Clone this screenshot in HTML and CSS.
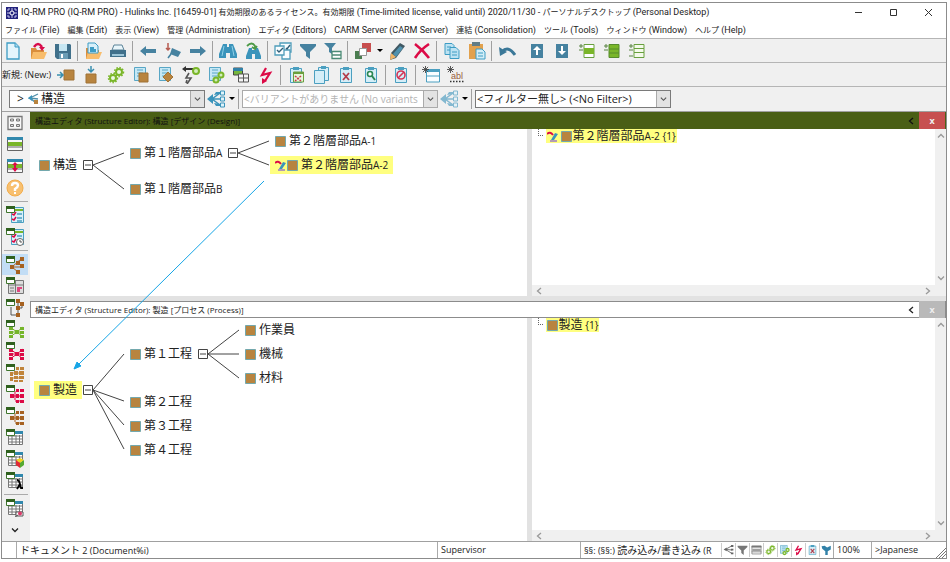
FILE: index.html
```html
<!DOCTYPE html>
<html lang="ja">
<head>
    <meta charset="UTF-8">
    <meta name="viewport" content="width=device-width, initial-scale=1.0">
    <title>IQ-RM PRO</title>
    <link rel="stylesheet" href="styles.css">
</head>
<body>

    <!-- icon set -->
    <svg class="sprite" aria-hidden="true">
        <symbol id="logo" viewBox="0 0 12 12"><path fill="#23237d" d="M0 0h12v12H0z"/><path fill="none" stroke="#c9c9ee" d="M3 1v2H1M9 1v2h2M3 11V9H1M9 11V9h2M6 1v3M6 8v3M1 6h3M8 6h3"/><circle cx="6" cy="6" r="2" fill="none" stroke="#fff"/></symbol>
        <symbol id="new" viewBox="0 0 18 18"><path fill="#e4f5fc" stroke="#3d9cc4" stroke-width="1.3" d="M3 1h8l4 4v12H3z"/><path fill="#a8d9ee" stroke="#3d9cc4" d="M11 1v4h4"/></symbol>
        <symbol id="folder" viewBox="0 0 18 18"><path fill="#d98e3d" d="M2 6h5l1 2h7v9H2z"/><path fill="#f8bd6c" d="M4 10h14l-3 7H2z"/></symbol>
        <symbol id="open" viewBox="0 0 18 18"><use href="#folder"/><path fill="none" stroke="#d80b4b" stroke-width="2.5" d="M5 5q4-6 8 0"/><path fill="#d80b4b" d="M10 5h6l-3 4z"/></symbol>
        <symbol id="save" viewBox="0 0 18 18"><path fill="#40708b" d="M1 2h15l1 1v14H3l-2-2z"/><path fill="#c6e6f2" d="M5 2h8v7H5z"/><path fill="#6a9cb5" d="M5 11h9v6H5z"/><path fill="#fff" d="M7 12h2v4H7z"/></symbol>
        <symbol id="import" viewBox="0 0 18 18"><use href="#folder"/><path fill="#d8f0fa" stroke="#3d9cc4" d="M4 1h7l3 3v7H4z"/><path fill="#3d9cc4" d="M6 5h4v2h2v3H6z"/></symbol>
        <symbol id="print" viewBox="0 0 18 18"><path fill="#e8f5fa" stroke="#5b8398" d="M5 3h8l2 5H3z"/><path fill="#40708b" d="M1 8h16v7H1z"/><path fill="#9cc5d8" d="M3 12h12v2H3z"/></symbol>
        <symbol id="left" viewBox="0 0 18 18"><path fill="#4682a0" d="M1 9l6-5v3h10v4H7v3z"/></symbol>
        <symbol id="right" viewBox="0 0 18 18"><path fill="#4682a0" d="M17 9l-6-5v3H1v4h10v3z"/></symbol>
        <symbol id="pin" viewBox="0 0 18 18"><path stroke="#b65b50" stroke-width="1.5" fill="none" d="M4 1v7M2 6l2 2 2-2"/><path fill="#4682a0" d="M8 6l9 4-3 5-8-3z"/><path stroke="#4682a0" stroke-width="1.5" d="M7 12l-3 4"/></symbol>
        <symbol id="find" viewBox="0 0 18 18"><path fill="#3b94bb" d="M4 2h4v3h2V2h4l4 10v4h-7v-5H7v5H0v-4z"/><path stroke="#8fd0e8" d="M5 4L3 14M13 4l2 10"/></symbol>
        <symbol id="findnext" viewBox="0 0 18 18"><path fill="#3b94bb" d="M5 6h3v2h3V6h3l3 8v3h-6v-5H8v5H2v-3z"/><path fill="none" stroke="#4d9a46" stroke-width="1.8" d="M3 4q5-5 8 0v3M8 5l3 2 2-3"/></symbol>
        <symbol id="checks" viewBox="0 0 18 18"><path fill="#f8fdff" stroke="#4f9dbb" stroke-width="1.3" d="M6 1h11v9H6z"/><path fill="#f8fdff" stroke="#4f9dbb" stroke-width="1.3" d="M8 8h8v9H8z"/><path fill="#f8fdff" stroke="#4f9dbb" stroke-width="1.3" d="M1 4h9v9H1z"/><path fill="none" stroke="#315f78" stroke-width="1.4" d="M3 8l2 2 4-4M12 6l1 1 3-4"/></symbol>
        <symbol id="funnel" viewBox="0 0 18 18"><path fill="#4682a0" d="M1 2h16v2l-6 6v7l-4-3v-4L1 4z"/></symbol>
        <symbol id="funneltab" viewBox="0 0 18 18"><path fill="#4682a0" d="M0 1h12L8 6v6L5 10V6z"/><path fill="#fff" stroke="#4c8b76" stroke-width="1.3" d="M8 9.5h9v7H8zM8 13h9"/></symbol>
        <symbol id="squares" viewBox="0 0 18 18"><path fill="#c74e4e" d="M8 1h9v9H8z"/><path fill="#4b7d50" d="M1 9h7v8H1z"/><path fill="#fff" stroke="#999" d="M5.500 6.500h7v7h-7z"/></symbol>
        <symbol id="pencil" viewBox="0 0 18 18"><path fill="#405964" d="M12 1l5 3-9 12-6 2 1-7z"/><path fill="#4f91ae" d="M12 4l3 2-7 9-3-3z"/><path fill="#f1b568" d="M3 11l5 4-6 3z"/></symbol>
        <symbol id="delete" viewBox="0 0 18 18"><path fill="none" stroke="#dc0a46" stroke-width="2.600" d="M2 2q8 6 14 14M16 2Q7 8 2 16"/></symbol>
        <symbol id="copy" viewBox="0 0 18 18"><path fill="#bce2f2" stroke="#3d9cc4" d="M2 1.500h7l2 2v9H2z"/><path stroke="#3d9cc4" d="M4 5h4M4 8h4"/><path fill="#bce2f2" stroke="#3d9cc4" d="M7 5.500h6l3 3v8H7z"/><path stroke="#3d9cc4" d="M9 10h5M9 13h5"/></symbol>
        <symbol id="paste" viewBox="0 0 18 18"><path fill="#e2a14d" d="M1 2h14v15H1z"/><path fill="#607d87" d="M4 0h8v4H4z"/><path fill="#d2edf7" stroke="#3d9cc4" d="M8 7h6l3 3v7H8z"/><path stroke="#3d9cc4" d="M10 11h5M10 14h5"/></symbol>
        <symbol id="undo" viewBox="0 0 18 18"><path fill="none" stroke="#3b7898" stroke-width="3" d="M4 10q6-7 13 3"/><path fill="#3b7898" d="M1 5l1 9 7-4z"/></symbol>
        <symbol id="up" viewBox="0 0 18 18"><path fill="#4682a0" d="M3 2h12v14H3z"/><path fill="#fff" d="M9 4l4 4h-3v5H8V8H5z"/></symbol>
        <symbol id="down" viewBox="0 0 18 18"><path fill="#4682a0" d="M3 2h12v14H3z"/><path fill="#fff" d="M9 13L5 9h3V4h2v5h3z"/></symbol>
        <symbol id="rows1" viewBox="0 0 18 18"><path fill="#fff" stroke="#68a03e" d="M6 2.500h10v13H6z"/><path fill="#7ab629" d="M6 6h10v6H6z"/><path stroke="#588342" d="M1 4h4M3 2v4M1 8h4"/></symbol>
        <symbol id="rows2" viewBox="0 0 18 18"><path fill="#7ab629" stroke="#568c2d" d="M6 2.500h10v13H6zM6 7h10M6 11h10"/><path stroke="#588342" d="M1 4h4M3 2v4M1 8h4"/></symbol>
        <symbol id="rows3" viewBox="0 0 18 18"><path fill="#f4faea" stroke="#68a03e" d="M6 2.500h10v4H6zM6 6.500h10v4H6zM6 10.500h10v5H6z"/><path stroke="#588342" d="M1 4h4M3 2v4M1 8h4M1 14h4"/></symbol>
        <symbol id="sq" viewBox="0 0 11 11"><path fill="#b8843f" stroke="#73a8ad" d="M.5.5h10v10H.5z"/></symbol>
        <symbol id="after" viewBox="0 0 18 18"><path fill="#b8843f" stroke="#a07337" d="M7 4h10v10H7z"/><path stroke="#398eaf" stroke-width="1.500" fill="none" d="M0 9h6M3 6l3 3-3 3"/></symbol>
        <symbol id="below" viewBox="0 0 18 18"><path fill="#b8843f" stroke="#a07337" d="M4 8h10v9H4z"/><path stroke="#398eaf" stroke-width="1.500" fill="none" d="M9 0v6M6 3l3 3 3-3"/></symbol>
        <symbol id="gears" viewBox="0 0 18 18"><g fill="#eef7e6" stroke="#7ab629" stroke-width="2"><circle cx="12" cy="6" r="3"/><circle cx="6" cy="12" r="3"/></g><g fill="none" stroke="#7ab629" stroke-width="1.500" stroke-dasharray="1.500 1.500"><circle cx="12" cy="6" r="4.500"/><circle cx="6" cy="12" r="4.500"/></g></symbol>
        <symbol id="page" viewBox="0 0 18 18"><path fill="#c6e8f5" stroke="#58a6c5" d="M2.500 1.500h11v13h-11z"/><path stroke="#58a6c5" d="M5 4h6M5 7h6M5 10h6"/></symbol>
        <symbol id="pagesq" viewBox="0 0 18 18"><use href="#page"/><path fill="#b8843f" stroke="#a07337" d="M7 7h9v9H7z"/></symbol>
        <symbol id="pagedia" viewBox="0 0 18 18"><use href="#page"/><path fill="#b8843f" stroke="#a07337" d="M11 6l5 5-5 5-5-5z"/></symbol>
        <symbol id="boltgear" viewBox="0 0 18 18"><path fill="#333" d="M0 3l4-3v2h7v2H4v2z"/><circle cx="14" cy="5" r="3" fill="#d3edbd" stroke="#7ab629" stroke-width="2"/><path fill="none" stroke="#555" stroke-width="1.600" d="M7 7L4 12h5l-4 6M4 17l1-3"/></symbol>
        <symbol id="pagegear" viewBox="0 0 18 18"><use href="#page"/><circle cx="14" cy="9" r="2.500" fill="#d3edbd" stroke="#7ab629" stroke-width="2"/><circle cx="9" cy="14" r="2.500" fill="#d3edbd" stroke="#7ab629" stroke-width="2"/></symbol>
        <symbol id="tables" viewBox="0 0 18 18"><path fill="#76b73d" stroke="#444" d="M1.500 2h9v7h-9z"/><path fill="#3181a8" d="M1 2h10v3H1z"/><path fill="#f4f4f4" stroke="#555" d="M6.500 8h10v8h-10zM6 12h11M11.500 8v8"/></symbol>
        <symbol id="bolt" viewBox="0 0 18 18"><path fill="none" stroke="#dc0a46" stroke-width="2.200" d="M9 2L5 9l8-2-5 8"/><path fill="#dc0a46" d="M5 12v6l5-3z"/></symbol>
        <symbol id="clip" viewBox="0 0 18 18"><path fill="#d5eef8" stroke="#4b9fc0" d="M3.500 2.500h11v14h-11z"/><path fill="#4b9fc0" d="M6 1h6v3H6z"/></symbol>
        <symbol id="cliptab" viewBox="0 0 18 18"><use href="#clip"/><path fill="#e5f6da" stroke="#6a9f3d" d="M6.500 6h10v10h-10z"/><path fill="#6a9f3d" d="M6 6h11v2H6z"/><path stroke="#ca374d" stroke-dasharray="2 1" stroke-width="1.500" d="M8 10l6 5M14 10l-6 5"/></symbol>
        <symbol id="clips" viewBox="0 0 18 18"><path fill="#d5eef8" stroke="#4b9fc0" d="M6.500 1.500h10v13h-10z"/><path fill="#d5eef8" stroke="#4b9fc0" d="M2.500 4.500h10v13h-10z"/><path fill="#4b9fc0" d="M9 0h5v3H9z"/></symbol>
        <symbol id="clipx" viewBox="0 0 18 18"><use href="#clip"/><path stroke="#b33d4b" stroke-width="1.800" d="M6 7l6 7M12 7l-6 7"/></symbol>
        <symbol id="clipfind" viewBox="0 0 18 18"><use href="#clip"/><circle cx="8" cy="8" r="2.500" fill="#fff" stroke="#2b8753" stroke-width="1.600"/><path stroke="#2b8753" stroke-width="2" d="M10 10l3 4"/></symbol>
        <symbol id="clipno" viewBox="0 0 18 18"><use href="#clip"/><circle cx="9" cy="9" r="4" fill="none" stroke="#d43456" stroke-width="1.600"/><path stroke="#d43456" stroke-width="1.600" d="M6 12l6-6"/></symbol>
        <symbol id="star" viewBox="0 0 8 8"><path stroke="#444" d="M4 0v8M0 4h8M1 1l6 6M7 1L1 7"/></symbol>
        <symbol id="newtab" viewBox="0 0 18 18"><path fill="#f9fdff" stroke="#4b9fc0" d="M4.500 4h13v12h-13zM4 10h14"/><path fill="#4b9fc0" d="M4 3h14v3H4z"/><use href="#star" width="7" height="7"/></symbol>
        <symbol id="tree" viewBox="0 0 18 18"><path fill="none" stroke="#3b94bb" stroke-width="1.500" d="M13 3L5 9l8 6M5 9h8"/><path fill="#3b94bb" d="M0 9l6-5v10zM7 5l2-3h4v2zM7 13l2 3h4v-2z"/><path fill="#dff3fa" stroke="#3b94bb" d="M13.500 1h4v4h-4zM13.500 7h4v4h-4zM13.500 13h4v4h-4z"/></symbol>
        <symbol id="fork" viewBox="0 0 18 18"><path fill="none" stroke="#555" stroke-width="1.300" d="M15 2L4 8l11 1M4 8l11 7"/><path fill="#666" d="M1 8l5-3v6zM13 1h4v3h-4zM13 7h4v3h-4zM13 13h4v3h-4z"/></symbol>
        <symbol id="treesm" viewBox="0 0 12 12"><path fill="none" stroke="#4f8fa9" stroke-width="1.300" d="M10 1L2 5l8 1M2 5l6 5"/><path fill="#3b94bb" d="M0 5l4-3v6z"/><path fill="#b8843f" d="M6 7h4v4H6z"/></symbol>
        <symbol id="caret" viewBox="0 0 6 6"><path d="M0 1h6L3 4z"/></symbol>
        <symbol id="chev" viewBox="0 0 8 8"><path fill="none" stroke="currentColor" stroke-width="1.300" d="M1 2.500l3 3 3-3"/></symbol>
        <symbol id="chevup" viewBox="0 0 8 8"><path fill="none" stroke="currentColor" stroke-width="1.300" d="M1 5.500l3-3 3 3"/></symbol>
        <symbol id="chevl" viewBox="0 0 8 8"><path fill="none" stroke="currentColor" stroke-width="1.300" d="M6 1L2.500 4 6 7"/></symbol>
        <symbol id="chevr" viewBox="0 0 8 8"><path fill="none" stroke="currentColor" stroke-width="1.300" d="M2 1l3.500 3L2 7"/></symbol>
        <symbol id="edited" viewBox="0 0 11 11"><path fill="none" stroke="#dc0a46" stroke-width="2" d="M0 3q3-3 6 1"/><path fill="#3b94bb" d="M8 2l3 1-4 6H4z"/><path stroke="#9a7bc4" stroke-width="1.500" d="M3 10h7"/></symbol>
        <!-- side bar -->
        <symbol id="tab" viewBox="0 0 18 18"><path fill="#fff" stroke="#3f752d" d="M.5.5h8v6h-8z"/><path fill="#2f611e" d="M0 0h9v3H0z"/></symbol>
        <symbol id="s-grid" viewBox="0 0 18 18"><path fill="#f8f8f8" stroke="#777" stroke-width="1.300" d="M2 2.500h14v13H2z"/><path fill="#ddd" stroke="#777" d="M4.500 5h3v2h-3zM10.500 5h3v2h-3zM4.500 10.500h3v2h-3zM10.500 10.500h3v2h-3z"/></symbol>
        <symbol id="s-rows" viewBox="0 0 18 18"><path fill="#f8f8f8" stroke="#666" d="M1.500 2.500h15v13h-15zM1 12h16"/><path fill="#3188ad" d="M1 2h16v3H1z"/><path fill="#7ab629" d="M2 7h14v4H2z"/></symbol>
        <symbol id="s-rows2" viewBox="0 0 18 18"><use href="#s-rows"/><path fill="#dc0a46" d="M9 5l3 3h-2v3h2l-3 4-3-4h2V8H6z"/></symbol>
        <symbol id="s-help" viewBox="0 0 18 18"><circle cx="9" cy="9" r="8" fill="#f8c070" stroke="#f2ad4c"/><path fill="none" stroke="#fff" stroke-width="2.400" d="M6 7q0-3 3-3t3 2.500Q12 8 9 10v2"/><path fill="#fff" d="M8 13h2v2H8z"/></symbol>
        <symbol id="s-list" viewBox="0 0 18 18"><path fill="#d8f0fa" stroke="#4b9fc0" d="M5.500 1.500h12v15h-12z"/><path stroke="#4b9fc0" stroke-width="1.300" d="M11 8h5M11 12h5M11 15h5"/><path stroke="#7ab629" stroke-width="2" d="M9 4h8"/><path fill="none" stroke="#dc0a46" stroke-width="1.500" d="M6 8l2 1 2-3M6 13l2 1 2-3"/><use href="#tab"/></symbol>
        <symbol id="s-clock" viewBox="0 0 18 18"><use href="#s-list"/><circle cx="14" cy="14" r="3.500" fill="#fff" stroke="#666"/><path fill="none" stroke="#555" d="M14 12v2h2"/></symbol>
        <symbol id="s-tree" viewBox="0 0 18 18"><path fill="none" stroke="#a66120" d="M6 11l9-8M6 11h9M6 11l6 5"/><path fill="#a66120" d="M4 9h4v4H4zM14 1h4v4h-4zM10 5h4v4h-4zM14 8h4v4h-4zM10 14h4v4h-4z"/><use href="#tab"/></symbol>
        <symbol id="s-form" viewBox="0 0 18 18"><path fill="#ddd" stroke="#777" d="M2.500 3.500h15v13h-15zM9.500 3v14M2 8h16"/><path stroke="#777" d="M4 11h4M4 14h4"/><path fill="#df477e" d="M11 10h5v2h-2v3h-3z"/><use href="#tab"/></symbol>
        <symbol id="s-net" viewBox="0 0 18 18"><path fill="none" stroke="#555" d="M5 8v8h6M12 3v12M16 5v4h-5"/><path fill="#a66120" d="M10 0h4v4h-4zM14 3h4v4h-4zM10 7h4v4h-4zM10 14h4v4h-4z"/><use href="#tab"/></symbol>
        <symbol id="s-bow" viewBox="0 0 18 18"><path fill="none" stroke="currentColor" d="M4 7l7 5 6-5M4 17l7-5 6 5M4 12h13"/><path fill="currentColor" d="M3 7h4v3H3zM3 11h4v3H3zM3 15h4v3H3zM9 10h4v4H9zM14 7h4v3h-4zM14 11h4v3h-4zM14 15h4v3h-4z"/><use href="#tab"/></symbol>
        <symbol id="s-stack" viewBox="0 0 18 18"><path fill="#c0843a" d="M10 3h3v3h-3zM14 3h4v3h-4zM4 8h3v4H4zM8 7h4v4H8zM13 7h5v4h-5zM4 13h3v4H4zM8 12h4v3H8zM13 12h5v3h-5zM8 16h4v2H8zM13 16h4v2h-4z"/><path stroke="#c0843a" d="M5 9h12M5 14h12"/><use href="#tab"/></symbol>
        <symbol id="s-dots" viewBox="0 0 18 18"><path fill="none" stroke="currentColor" d="M5 11h10M9 6v9M9 16h6"/><path fill="currentColor" d="M10 4h3v3h-3zM14 4h4v3h-4zM4 9h4v4H4zM10 9h3v4h-3zM14 9h4v4h-4zM10 15h3v3h-3zM14 15h4v3h-4z"/><use href="#tab"/></symbol>
        <symbol id="s-table" viewBox="0 0 18 18"><path fill="#fff" stroke="#777" d="M2.500 2.500h14v13h-14zM2 7h15M2 10h15M2 13h15M6 6v10M10 6v10M13.500 6v10"/><path fill="#3188ad" d="M9 2h8v3H9z"/><use href="#tab"/></symbol>
        <symbol id="s-cube" viewBox="0 0 18 18"><use href="#s-table"/><path fill="#f2d21e" d="M10 10l4-2 4 2-4 3z"/><path fill="#df2935" d="M10 10l4 3v5l-4-3z"/><path fill="#56aa32" d="M18 10l-4 3v5l4-3z"/></symbol>
        <symbol id="s-lambda" viewBox="0 0 18 18"><use href="#s-table"/><path fill="none" stroke="#000" stroke-width="1.800" d="M11 8q2 0 3 4l1 4h2M14 12l-3 5"/></symbol>
        <symbol id="s-glass" viewBox="0 0 18 18"><use href="#s-table"/><path fill="#fff" stroke="#555" d="M10 13h7v4h-7z"/><circle cx="14" cy="14.500" r="2" fill="#dc3a6a"/><path stroke="#555" d="M12 16l-3 2"/></symbol>
        <symbol id="robot" viewBox="0 0 18 18"><path fill="#3181a8" d="M1 3l5-1 4 3 6-3v6l-5 3v6H7v-6L2 7z"/></symbol>
    </svg>

    <div class="window">
        <header class="titlebar">
            <svg class="logo"><use href="#logo"/></svg>
            <h1>IQ-RM PRO (IQ-RM PRO) - Hulinks Inc. [16459-01] <span class="ja">有効期限のあるライセンス。有効期限</span> (Time-limited license, valid until) 2020/11/30 - <span class="ja">パーソナルデスクトップ</span> (Personal Desktop)</h1>
            <div class="winbuttons">
                <button aria-label="Minimize"><svg viewBox="0 0 9 9"><path d="M1 4.500h7"/></svg></button>
                <button aria-label="Maximize"><svg viewBox="0 0 9 9"><path d="M1.500 1.500h6v6h-6z"/></svg></button>
                <button aria-label="Close"><svg viewBox="0 0 9 9"><path d="M1 1l7 7M8 1L1 8"/></svg></button>
            </div>
        </header>

        <nav class="menubar">
            <button><span class="ja">ファイル</span> (File)</button>
            <button><span class="ja">編集</span> (Edit)</button>
            <button><span class="ja">表示</span> (View)</button>
            <button><span class="ja">管理</span> (Administration)</button>
            <button><span class="ja">エディタ</span> (Editors)</button>
            <button>CARM Server (CARM Server)</button>
            <button><span class="ja">連結</span> (Consolidation)</button>
            <button><span class="ja">ツール</span> (Tools)</button>
            <button><span class="ja">ウィンドウ</span> (Window)</button>
            <button><span class="ja">ヘルプ</span> (Help)</button>
        </nav>

        <div class="toolbar">
            <button aria-label="New"><svg><use href="#new"/></svg></button>
            <button aria-label="Open"><svg><use href="#open"/></svg></button>
            <button aria-label="Save"><svg><use href="#save"/></svg></button>
            <i class="sep"></i>
            <button aria-label="Import"><svg><use href="#import"/></svg></button>
            <button aria-label="Print"><svg><use href="#print"/></svg></button>
            <i class="sep"></i>
            <button aria-label="Back"><svg><use href="#left"/></svg></button>
            <button aria-label="Pin"><svg><use href="#pin"/></svg></button>
            <button aria-label="Forward"><svg><use href="#right"/></svg></button>
            <i class="sep"></i>
            <button aria-label="Find"><svg><use href="#find"/></svg></button>
            <button aria-label="Find next"><svg><use href="#findnext"/></svg></button>
            <i class="sep"></i>
            <button aria-label="Select"><svg><use href="#checks"/></svg></button>
            <button aria-label="Filter"><svg><use href="#funnel"/></svg></button>
            <button aria-label="Filter table"><svg><use href="#funneltab"/></svg></button>
            <i class="sep"></i>
            <button aria-label="Colors"><svg><use href="#squares"/></svg></button>
            <button class="drop" aria-label="More colors"><svg><use href="#caret"/></svg></button>
            <button aria-label="Edit"><svg><use href="#pencil"/></svg></button>
            <button aria-label="Delete"><svg><use href="#delete"/></svg></button>
            <i class="sep"></i>
            <button aria-label="Copy"><svg><use href="#copy"/></svg></button>
            <button aria-label="Paste"><svg><use href="#paste"/></svg></button>
            <i class="sep"></i>
            <button aria-label="Undo"><svg><use href="#undo"/></svg></button>
            <i class="sep blank"></i>
            <button aria-label="Move up"><svg><use href="#up"/></svg></button>
            <button aria-label="Move down"><svg><use href="#down"/></svg></button>
            <button aria-label="Expand one"><svg><use href="#rows1"/></svg></button>
            <button aria-label="Expand all"><svg><use href="#rows2"/></svg></button>
            <button aria-label="Expand rows"><svg><use href="#rows3"/></svg></button>
        </div>

        <div class="toolbar">
            <span class="label">新規: (New:)</span>
            <button aria-label="After"><svg><use href="#after"/></svg></button>
            <button aria-label="Below"><svg><use href="#below"/></svg></button>
            <button aria-label="Function"><svg><use href="#gears"/></svg></button>
            <button aria-label="Page element"><svg><use href="#pagesq"/></svg></button>
            <button aria-label="Page variant"><svg><use href="#pagedia"/></svg></button>
            <button aria-label="Failure function"><svg><use href="#boltgear"/></svg></button>
            <button aria-label="Page function"><svg><use href="#pagegear"/></svg></button>
            <button aria-label="Tables"><svg><use href="#tables"/></svg></button>
            <button aria-label="Failure"><svg><use href="#bolt"/></svg></button>
            <i class="sep"></i>
            <button aria-label="Clipboard table"><svg><use href="#cliptab"/></svg></button>
            <button aria-label="Clipboards"><svg><use href="#clips"/></svg></button>
            <button aria-label="Clear clipboard"><svg><use href="#clipx"/></svg></button>
            <button aria-label="View clipboard"><svg><use href="#clipfind"/></svg></button>
            <i class="sep"></i>
            <button aria-label="Block"><svg><use href="#clipno"/></svg></button>
            <i class="sep"></i>
            <button aria-label="New table"><svg><use href="#newtab"/></svg></button>
            <button aria-label="New text"><svg viewBox="0 0 18 18"><use href="#star" width="7" height="7"/><text class="abl" x="4" y="13">abl</text><path stroke="#333" stroke-width="1.500" stroke-dasharray="1.500 1.500" d="M3 15.500h14"/></svg></button>
        </div>

        <div class="toolbar filters">
            <div class="combo">
                <span class="prefix">&gt; <svg><use href="#treesm"/></svg></span>
                <select aria-label="Structure"><option>構造</option></select>
                <svg class="arrow"><use href="#chev"/></svg>
            </div>
            <button aria-label="Structure tree"><svg><use href="#tree"/></svg></button>
            <button class="drop" aria-label="Tree menu"><svg><use href="#caret"/></svg></button>
            <i class="sep"></i>
            <div class="combo off">
                <select aria-label="Variant" disabled><option>&lt;バリアントがありません (No variants</option></select>
                <svg class="arrow"><use href="#chev"/></svg>
            </div>
            <button class="faded" aria-label="Variant tree"><svg><use href="#tree"/></svg></button>
            <button class="drop" aria-label="Variant menu"><svg><use href="#caret"/></svg></button>
            <i class="sep"></i>
            <div class="combo filter">
                <select aria-label="Filter"><option>&lt;フィルター無し&gt; (&lt;No Filter&gt;)</option></select>
                <svg class="arrow"><use href="#chev"/></svg>
            </div>
        </div>

        <div class="main">
            <aside class="sidebar">
                <button aria-label="Overview"><svg><use href="#s-grid"/></svg></button>
                <button aria-label="Rows"><svg><use href="#s-rows"/></svg></button>
                <button aria-label="Split rows"><svg><use href="#s-rows2"/></svg></button>
                <button aria-label="Help"><svg><use href="#s-help"/></svg></button>
                <hr>
                <button aria-label="Tasks"><svg><use href="#s-list"/></svg></button>
                <button aria-label="Schedule"><svg><use href="#s-clock"/></svg></button>
                <hr>
                <button class="active" aria-label="Structure editor"><svg><use href="#s-tree"/></svg></button>
                <button aria-label="Form"><svg><use href="#s-form"/></svg></button>
                <button aria-label="Flow"><svg><use href="#s-net"/></svg></button>
                <button class="green" aria-label="Function net"><svg><use href="#s-bow"/></svg></button>
                <button class="red" aria-label="Failure net"><svg><use href="#s-bow"/></svg></button>
                <button aria-label="Matrix"><svg><use href="#s-stack"/></svg></button>
                <button class="red" aria-label="Fault tree"><svg><use href="#s-dots"/></svg></button>
                <button class="brown" aria-label="Element tree"><svg><use href="#s-dots"/></svg></button>
                <button aria-label="Table"><svg><use href="#s-table"/></svg></button>
                <button aria-label="Statistics"><svg><use href="#s-cube"/></svg></button>
                <button aria-label="Lambda"><svg><use href="#s-lambda"/></svg></button>
                <hr>
                <button aria-label="Search"><svg><use href="#s-glass"/></svg></button>
                <button class="more" aria-label="More"><svg><use href="#chev"/></svg></button>
            </aside>

            <main class="editors">
                <section class="editor design">
                    <div class="editor-title">
                        <h2>構造エディタ (Structure Editor): 構造 [デザイン (Design)]</h2>
                        <button class="fold" aria-label="Fold"><svg><use href="#chevl"/></svg></button>
                        <button class="close" aria-label="Close">x</button>
                    </div>
                    <div class="panes">
                        <div class="pane canvas">
                            <svg class="lines" width="496" height="160">
                                <path d="M63 36L94 24M63 36L94 60M208 24L239 12M208 24L239 36"/>
                                <path class="box" d="M53.500 31.500h9v9h-9zM55 36h6M198.500 19.500h9v9h-9zM200 24h6"/>
                            </svg>
                            <div class="node d-root"><svg><use href="#sq"/></svg>構造</div>
                            <div class="node d-a"><svg><use href="#sq"/></svg>第１階層部品<small>A</small></div>
                            <div class="node d-b"><svg><use href="#sq"/></svg>第１階層部品<small>B</small></div>
                            <div class="node d-a1"><svg><use href="#sq"/></svg>第２階層部品<small>A-1</small></div>
                            <div class="node d-a2 mark"><svg class="edit"><use href="#edited"/></svg><svg><use href="#sq"/></svg>第２階層部品<small>A-2</small></div>
                        </div>
                        <div class="pane list">
                            <div class="entries">
                                <i class="elbow"></i>
                                <span class="entry"><svg class="edit"><use href="#edited"/></svg><svg><use href="#sq"/></svg>第２階層部品<small>A-2 {1}</small></span>
                            </div>
                            <div class="vscroll"><svg><use href="#chevup"/></svg><svg><use href="#chev"/></svg></div>
                            <div class="hscroll"><svg><use href="#chevl"/></svg><svg><use href="#chevr"/></svg></div>
                        </div>
                    </div>
                </section>

                <section class="editor process">
                    <div class="editor-title">
                        <h2>構造エディタ (Structure Editor): 製造 [プロセス (Process)]</h2>
                        <button class="fold" aria-label="Fold"><svg><use href="#chevl"/></svg></button>
                        <button class="close" aria-label="Close">x</button>
                    </div>
                    <div class="panes">
                        <div class="pane canvas">
                            <svg class="lines" width="496" height="160">
                                <path d="M63 72L94 36M63 72L94 83M63 72L94 107M63 72L94 131M178 36L209 12M178 36H209M178 36L209 60"/>
                                <path class="box" d="M53.500 67.500h9v9h-9zM55 72h6M168.500 31.500h9v9h-9zM170 36h6"/>
                            </svg>
                            <div class="node p-root mark"><svg><use href="#sq"/></svg>製造</div>
                            <div class="node p-1"><svg><use href="#sq"/></svg>第１工程</div>
                            <div class="node p-2"><svg><use href="#sq"/></svg>第２工程</div>
                            <div class="node p-3"><svg><use href="#sq"/></svg>第３工程</div>
                            <div class="node p-4"><svg><use href="#sq"/></svg>第４工程</div>
                            <div class="node p-man"><svg><use href="#sq"/></svg>作業員</div>
                            <div class="node p-machine"><svg><use href="#sq"/></svg>機械</div>
                            <div class="node p-material"><svg><use href="#sq"/></svg>材料</div>
                        </div>
                        <div class="pane list">
                            <div class="entries">
                                <i class="elbow"></i>
                                <span class="entry"><svg><use href="#sq"/></svg>製造<small> {1}</small></span>
                            </div>
                            <div class="vscroll"><svg><use href="#chevup"/></svg><svg><use href="#chev"/></svg></div>
                            <div class="hscroll"><svg><use href="#chevl"/></svg><svg><use href="#chevr"/></svg></div>
                        </div>
                    </div>
                </section>

                <svg class="link-arrow" viewBox="0 0 200 200"><path d="M194 7L8 191"/><path class="head" d="M4 195l3-7 4 4z"/></svg>
            </main>
        </div>

        <footer class="status">
            <span class="doc"><span class="ja-md">ドキュメント</span> 2 (Document%i)</span>
            <span class="user">Supervisor</span>
            <span class="mode">§§: (§§:) <span class="ja-md">読み込み/書き込み</span> (R</span>
            <div class="state">
                <svg><use href="#fork"/></svg>
                <svg class="gray"><use href="#funnel"/></svg>
                <svg class="gray"><use href="#s-rows"/></svg>
                <svg><use href="#gears"/></svg>
                <svg><use href="#pagegear"/></svg>
                <svg><use href="#bolt"/></svg>
                <svg><use href="#clipx"/></svg>
                <svg><use href="#robot"/></svg>
            </div>
            <span class="zoom">100%</span>
            <span class="lang">&gt;Japanese</span>
            <svg class="grip" viewBox="0 0 10 10"><path d="M0 10L10 0M3 10l7-7M6 10l4-4"/></svg>
        </footer>
    </div>

</body>
</html>
```
FILE: styles.css
```css
* {
    box-sizing: border-box;
}

body {
    margin: 0;
    padding: 2px 3px 3px 1px;
    height: 100vh;
    background: #fff;
    color: #222;
    font-family: "Open Sans", "Noto Sans CJK JP", sans-serif;
    font-size: 9px;
    line-height: 16px;
}

.sprite {
    position: absolute;
    width: 0;
    height: 0;
}

button {
    border: none;
    padding: 0;
    background: none;
    color: inherit;
    font: inherit;
    cursor: pointer;
}

svg {
    display: block;
    flex: none;
}

.ja {
    font-size: 8px;
}

.ja-md {
    font-size: 10px;
}

.window {
    height: 100%;
    display: flex;
    flex-direction: column;
    border: 1px solid #8c8c8c;
}

/* title bar and menu */
.titlebar,
.menubar {
    font-family: Roboto, "Noto Sans CJK JP", sans-serif;
}

.titlebar {
    display: flex;
    align-items: center;
    height: 19px;
    flex: none;
    padding-left: 4px;
}

.logo {
    width: 12px;
    height: 12px;
}

h1 {
    flex: 1;
    min-width: 0;
    margin: 0 0 0 3px;
    font-size: 9px;
    font-weight: normal;
    white-space: nowrap;
}

.winbuttons {
    display: flex;
}

.winbuttons button {
    width: 35px;
    display: flex;
    justify-content: center;
}

.winbuttons svg {
    width: 9px;
    height: 9px;
    fill: none;
    stroke: #333;
}

.menubar {
    display: flex;
    gap: 8px;
    height: 16px;
    flex: none;
    padding-left: 3px;
    white-space: nowrap;
}

/* tool bars */
.toolbar {
    display: flex;
    align-items: center;
    gap: 3px;
    height: 24px;
    flex: none;
    background: #f0f0f0;
    border-top: 1px solid #b5b5b5;
}

.toolbar button {
    width: 22px;
    height: 22px;
    flex: none;
    display: flex;
    align-items: center;
    justify-content: center;
}

.toolbar button svg {
    width: 18px;
    height: 18px;
}

.toolbar .drop {
    width: 6px;
}

.toolbar .drop svg {
    width: 6px;
    height: 6px;
}

.toolbar .faded svg {
    opacity: 0.6;
}

.abl {
    font-family: "Liberation Sans", sans-serif;
    font-size: 9px;
    fill: #985e3c;
}

.sep {
    width: 2px;
    height: 20px;
    flex: none;
    border-left: 1px solid #a0a0a0;
}

.sep.blank {
    border: none;
}

.toolbar .label {
    width: 50px;
    flex: none;
    white-space: nowrap;
}

.filters {
    gap: 2px;
    height: 26px;
    padding-left: 7px;
    border-bottom: 1px solid #a0a0a0;
}

.filters button {
    width: 18px;
}

.filters .drop {
    width: 9px;
}

.combo {
    display: flex;
    align-items: center;
    width: 196px;
    height: 18px;
    border: 1px solid #7a7a7a;
    background: #fff;
    font-size: 12px;
}

.combo .prefix {
    display: flex;
    align-items: center;
    gap: 4px;
    padding-left: 7px;
}

.combo .prefix svg {
    width: 12px;
    height: 12px;
}

.combo select {
    flex: 1;
    min-width: 0;
    height: 16px;
    padding: 0 1px;
    appearance: none;
    border: none;
    background: none;
    color: #222;
    font: inherit;
}

.combo.filter {
    font-size: 11px;
}

.combo.off {
    border-color: #aaa;
    font-size: 10px;
}

.combo.off select {
    color: #b4b4b4;
    opacity: 1;
}

.combo .arrow {
    width: 14px;
    height: 16px;
    padding: 3px;
    color: #555;
    background: #e3e3e3;
    border-left: 1px solid #aaa;
    pointer-events: none;
}

/* side bar */
.main {
    flex: 1;
    min-height: 0;
    display: flex;
}

.sidebar {
    width: 28px;
    flex: none;
    display: flex;
    flex-direction: column;
    background: #f0f0f0;
}

.sidebar button {
    flex: 1;
    width: 26px;
    display: flex;
    align-items: center;
    justify-content: center;
}

.sidebar svg {
    width: 18px;
    height: 18px;
}

.sidebar .active {
    background: #c2ddf5;
}

.sidebar .green {
    color: #75b52a;
}

.sidebar .red {
    color: #dc0a46;
}

.sidebar .brown {
    color: #a66120;
}

.sidebar .more svg {
    width: 8px;
    height: 8px;
}

.sidebar hr {
    margin: 2px 2px 3px;
    border: none;
    border-top: 1px solid #aaa;
}

/* editors */
.editors {
    flex: 1;
    min-width: 0;
    position: relative;
    display: flex;
    flex-direction: column;
    gap: 5px;
    background: #e2e2e2;
}

.editor {
    display: flex;
    flex-direction: column;
    min-height: 0;
}

.design {
    flex: 185 1 0;
}

.process {
    flex: 241 1 0;
}

.editor-title {
    display: flex;
    align-items: center;
    height: 17px;
    flex: none;
    background: #fff;
    border: 1px solid #8c8c8c;
}

.design .editor-title {
    background: #4a5f15;
    border-color: #4a5f15;
    color: #111;
}

h2 {
    flex: 1;
    margin: 0 0 0 4px;
    font-size: 8px;
    font-weight: normal;
    white-space: nowrap;
}

.fold {
    width: 12px;
}

.fold svg {
    width: 8px;
    height: 8px;
}

.close {
    width: 26px;
    height: 17px;
    flex: none;
    background: #b9b9b9;
    color: #eee;
    font-size: 9px;
    font-weight: bold;
}

.design .close {
    background: #c75050;
}

.panes {
    flex: 1;
    min-height: 0;
    display: flex;
    gap: 5px;
}

.pane {
    position: relative;
    min-width: 0;
    background: #fff;
    font-size: 12px;
}

.canvas {
    flex: 496 1 0;
}

.list {
    flex: 414 1 0;
    display: grid;
    grid-template: 1fr 11px / 1fr 11px;
}

/* tree diagram */
.lines {
    fill: none;
    stroke: #444;
}

.lines .box {
    fill: #fff;
}

.node {
    position: absolute;
    display: flex;
    align-items: center;
    height: 18px;
    padding: 0 5px;
    white-space: nowrap;
}

.node svg {
    width: 11px;
    height: 11px;
    margin-right: 3px;
}

small {
    font-size: 10px;
    white-space: pre;
}

.node .edit {
    margin-right: 1px;
}

.mark,
.entry {
    background: #ffff80;
}

.d-root { left: 4px; top: 27px; }
.d-a { left: 95px; top: 15px; }
.d-b { left: 95px; top: 51px; }
.d-a1 { left: 240px; top: 3px; }
.d-a2 { left: 240px; top: 27px; }

.p-root { left: 4px; top: 63px; }
.p-1 { left: 95px; top: 27px; }
.p-2 { left: 95px; top: 75px; }
.p-3 { left: 95px; top: 99px; }
.p-4 { left: 95px; top: 123px; }
.p-man { left: 210px; top: 3px; }
.p-machine { left: 210px; top: 27px; }
.p-material { left: 210px; top: 51px; }

.link-arrow {
    position: absolute;
    left: 40px;
    top: 62px;
    width: 200px;
    height: 200px;
    fill: none;
    stroke: #16a5e6;
    pointer-events: none;
}

.link-arrow .head {
    fill: #16a5e6;
}

/* list pane */
.entries {
    display: flex;
    align-items: flex-start;
    padding-left: 6px;
}

.elbow {
    width: 5px;
    height: 7px;
    margin-right: 3px;
    border-left: 1px dotted #666;
    border-bottom: 1px dotted #666;
}

.entry {
    display: flex;
    align-items: center;
    height: 14px;
    padding: 0 1px;
    line-height: 14px;
}

.entry svg {
    width: 11px;
    height: 11px;
    margin-right: 1px;
}

.entry .edit {
    margin-right: 3px;
}

.vscroll,
.hscroll {
    display: flex;
    align-items: center;
    justify-content: space-between;
    background: #f0f0f0;
    color: #999;
}

.vscroll {
    flex-direction: column;
    padding: 3px 0;
}

.hscroll {
    grid-column: 1 / -1;
    padding: 0 14px 0 3px;
}

.vscroll svg,
.hscroll svg {
    width: 8px;
    height: 8px;
}

/* status bar */
.status {
    display: flex;
    align-items: center;
    height: 17px;
    flex: none;
    padding-left: 14px;
    border-top: 1px solid #a0a0a0;
    white-space: nowrap;
}

.status > span {
    height: 16px;
    padding-left: 3px;
    border-left: 1px solid #aaa;
}

.doc {
    flex: 1;
}

.user {
    width: 143px;
}

.mode {
    width: 141px;
}

.state {
    display: flex;
}

.state svg {
    width: 14px;
    height: 14px;
    padding: 1px;
    border-left: 1px solid #ccc;
}

.state .gray {
    filter: grayscale(1);
}

.zoom {
    width: 38px;
}

.lang {
    width: 65px;
}

.grip {
    width: 10px;
    height: 10px;
    align-self: flex-end;
    stroke: #777;
}
```
